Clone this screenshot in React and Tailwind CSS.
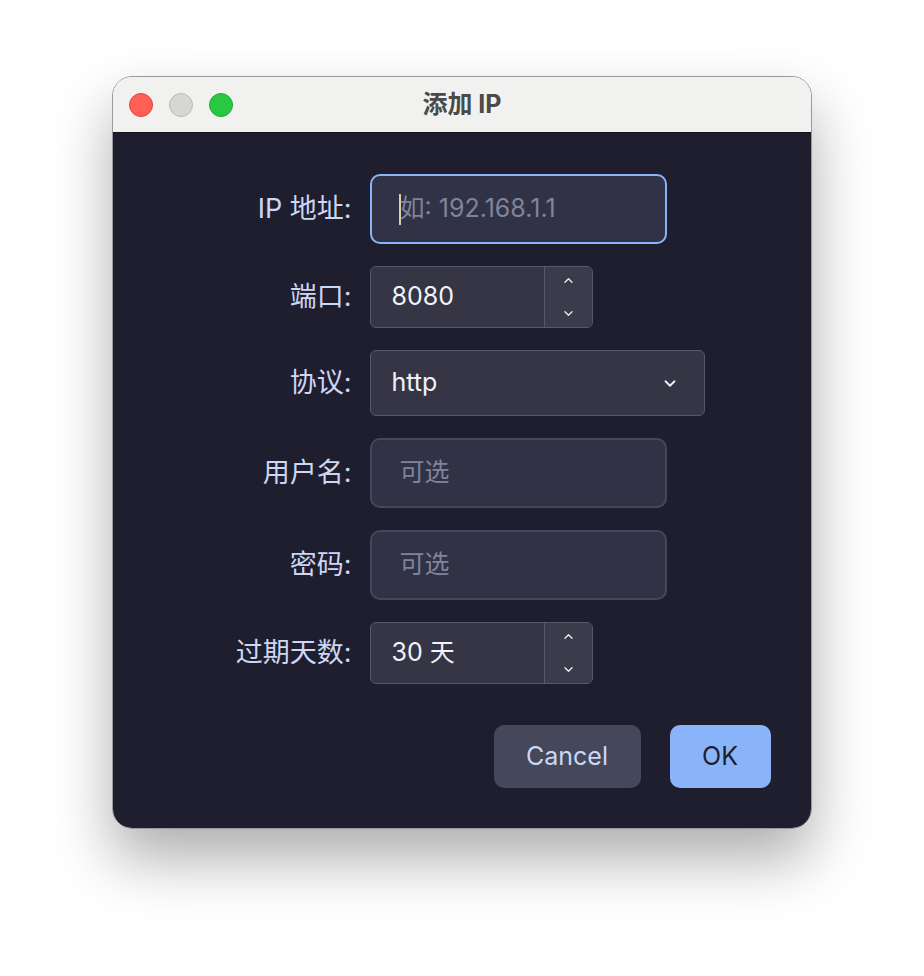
import React from 'react';

const font = { fontFamily: 'Inter, "Noto Sans CJK SC", sans-serif' };

function Chevron({ up, className }) {
  return (
    <svg viewBox="0 0 12 8" className={className} fill="none" stroke="currentColor" strokeWidth="1.6" strokeLinecap="round" strokeLinejoin="round">
      {up ? <path d="M2 6 L6 2 L10 6" /> : <path d="M2 2 L6 6 L10 2" />}
    </svg>
  );
}

function Label({ children }) {
  return <div className="text-right text-[27px] text-[#cdd6f4]">{children}</div>;
}

function TextInput({ placeholder, focused }) {
  return (
    <div
      className={
        'relative flex h-[70px] w-[297px] items-center rounded-[10px] bg-[#313246] px-[28px] text-[25px] ' +
        (focused ? 'border-2 border-[#89b4fa]' : 'border-2 border-[#45475a]')
      }
    >
      {focused && <span className="absolute left-[27px] top-[18px] h-[31px] w-[2px] bg-[#d8cfa8]" />}
      <span className="text-[#7f849c]">{placeholder}</span>
    </div>
  );
}

function SpinBox({ value }) {
  return (
    <div className="flex h-[62px] w-[223px] overflow-hidden rounded-[6px] border border-[#575869] bg-[#353545]">
      <div className="flex flex-1 items-center pl-[21px] text-[25px] text-[#f2f3f8]">{value}</div>
      <div className="flex w-[48px] flex-col items-center justify-center gap-[26px] border-l border-[#575869] bg-[#3b3b4c] text-[#e8e9f0]">
        <Chevron up className="h-[7px] w-[11px]" />
        <Chevron className="h-[7px] w-[11px]" />
      </div>
    </div>
  );
}

export default function App() {
  return (
    <div className="min-h-[976px] w-full bg-white" style={font}>
      <div className="flex justify-center pt-[76px]">
        <div className="ml-[-1px] w-[700px] overflow-hidden rounded-[20px] border border-[#9a9a9e] shadow-[0_30px_60px_rgba(0,0,0,0.32)]">
          <div className="relative flex h-[56px] items-center border-b border-[#151515] bg-[#f1f1ef] px-[16px]">
            <div className="flex gap-[16px]">
              <span className="h-[24px] w-[24px] rounded-full border border-[#e0443e] bg-[#fe5f57]" />
              <span className="h-[24px] w-[24px] rounded-full border border-[#b9b9b9] bg-[#d6d6d4]" />
              <span className="h-[24px] w-[24px] rounded-full border border-[#24a833] bg-[#2ac840]" />
            </div>
            <div className="absolute inset-x-0 top-0 flex h-full items-center justify-center pl-[1px] text-[25px] font-bold text-[#4a4a4a]">
              添加 IP
            </div>
          </div>
          <div className="bg-[#1f1e2e] px-[40px] pb-[40px] pt-[41px]">
            <div className="grid grid-cols-[199px_auto] items-center gap-x-[18px] gap-y-[22px]">
              <Label>IP 地址:</Label>
              <TextInput placeholder="如: 192.168.1.1" focused />
              <Label>端口:</Label>
              <SpinBox value="8080" />
              <Label>协议:</Label>
              <div className="flex h-[66px] w-[335px] items-center justify-between rounded-[6px] border border-[#575869] bg-[#353545] pl-[21px] pr-[27px] text-[25px] text-[#f2f3f8]">
                <span>http</span>
                <Chevron className="h-[9px] w-[14px] text-[#f2f3f8]" />
              </div>
              <Label>用户名:</Label>
              <TextInput placeholder="可选" />
              <Label>密码:</Label>
              <TextInput placeholder="可选" />
              <Label>过期天数:</Label>
              <SpinBox value="30 天" />
            </div>
            <div className="mt-[41px] flex justify-end gap-[29px]">
              <button className="h-[63px] w-[147px] rounded-[10px] bg-[#45475a] text-[25px] text-[#cdd6f4]">Cancel</button>
              <button className="h-[63px] w-[101px] rounded-[10px] bg-[#89b4fa] text-[25px] text-[#1e1e2e]">OK</button>
            </div>
          </div>
        </div>
      </div>
    </div>
  );
}
